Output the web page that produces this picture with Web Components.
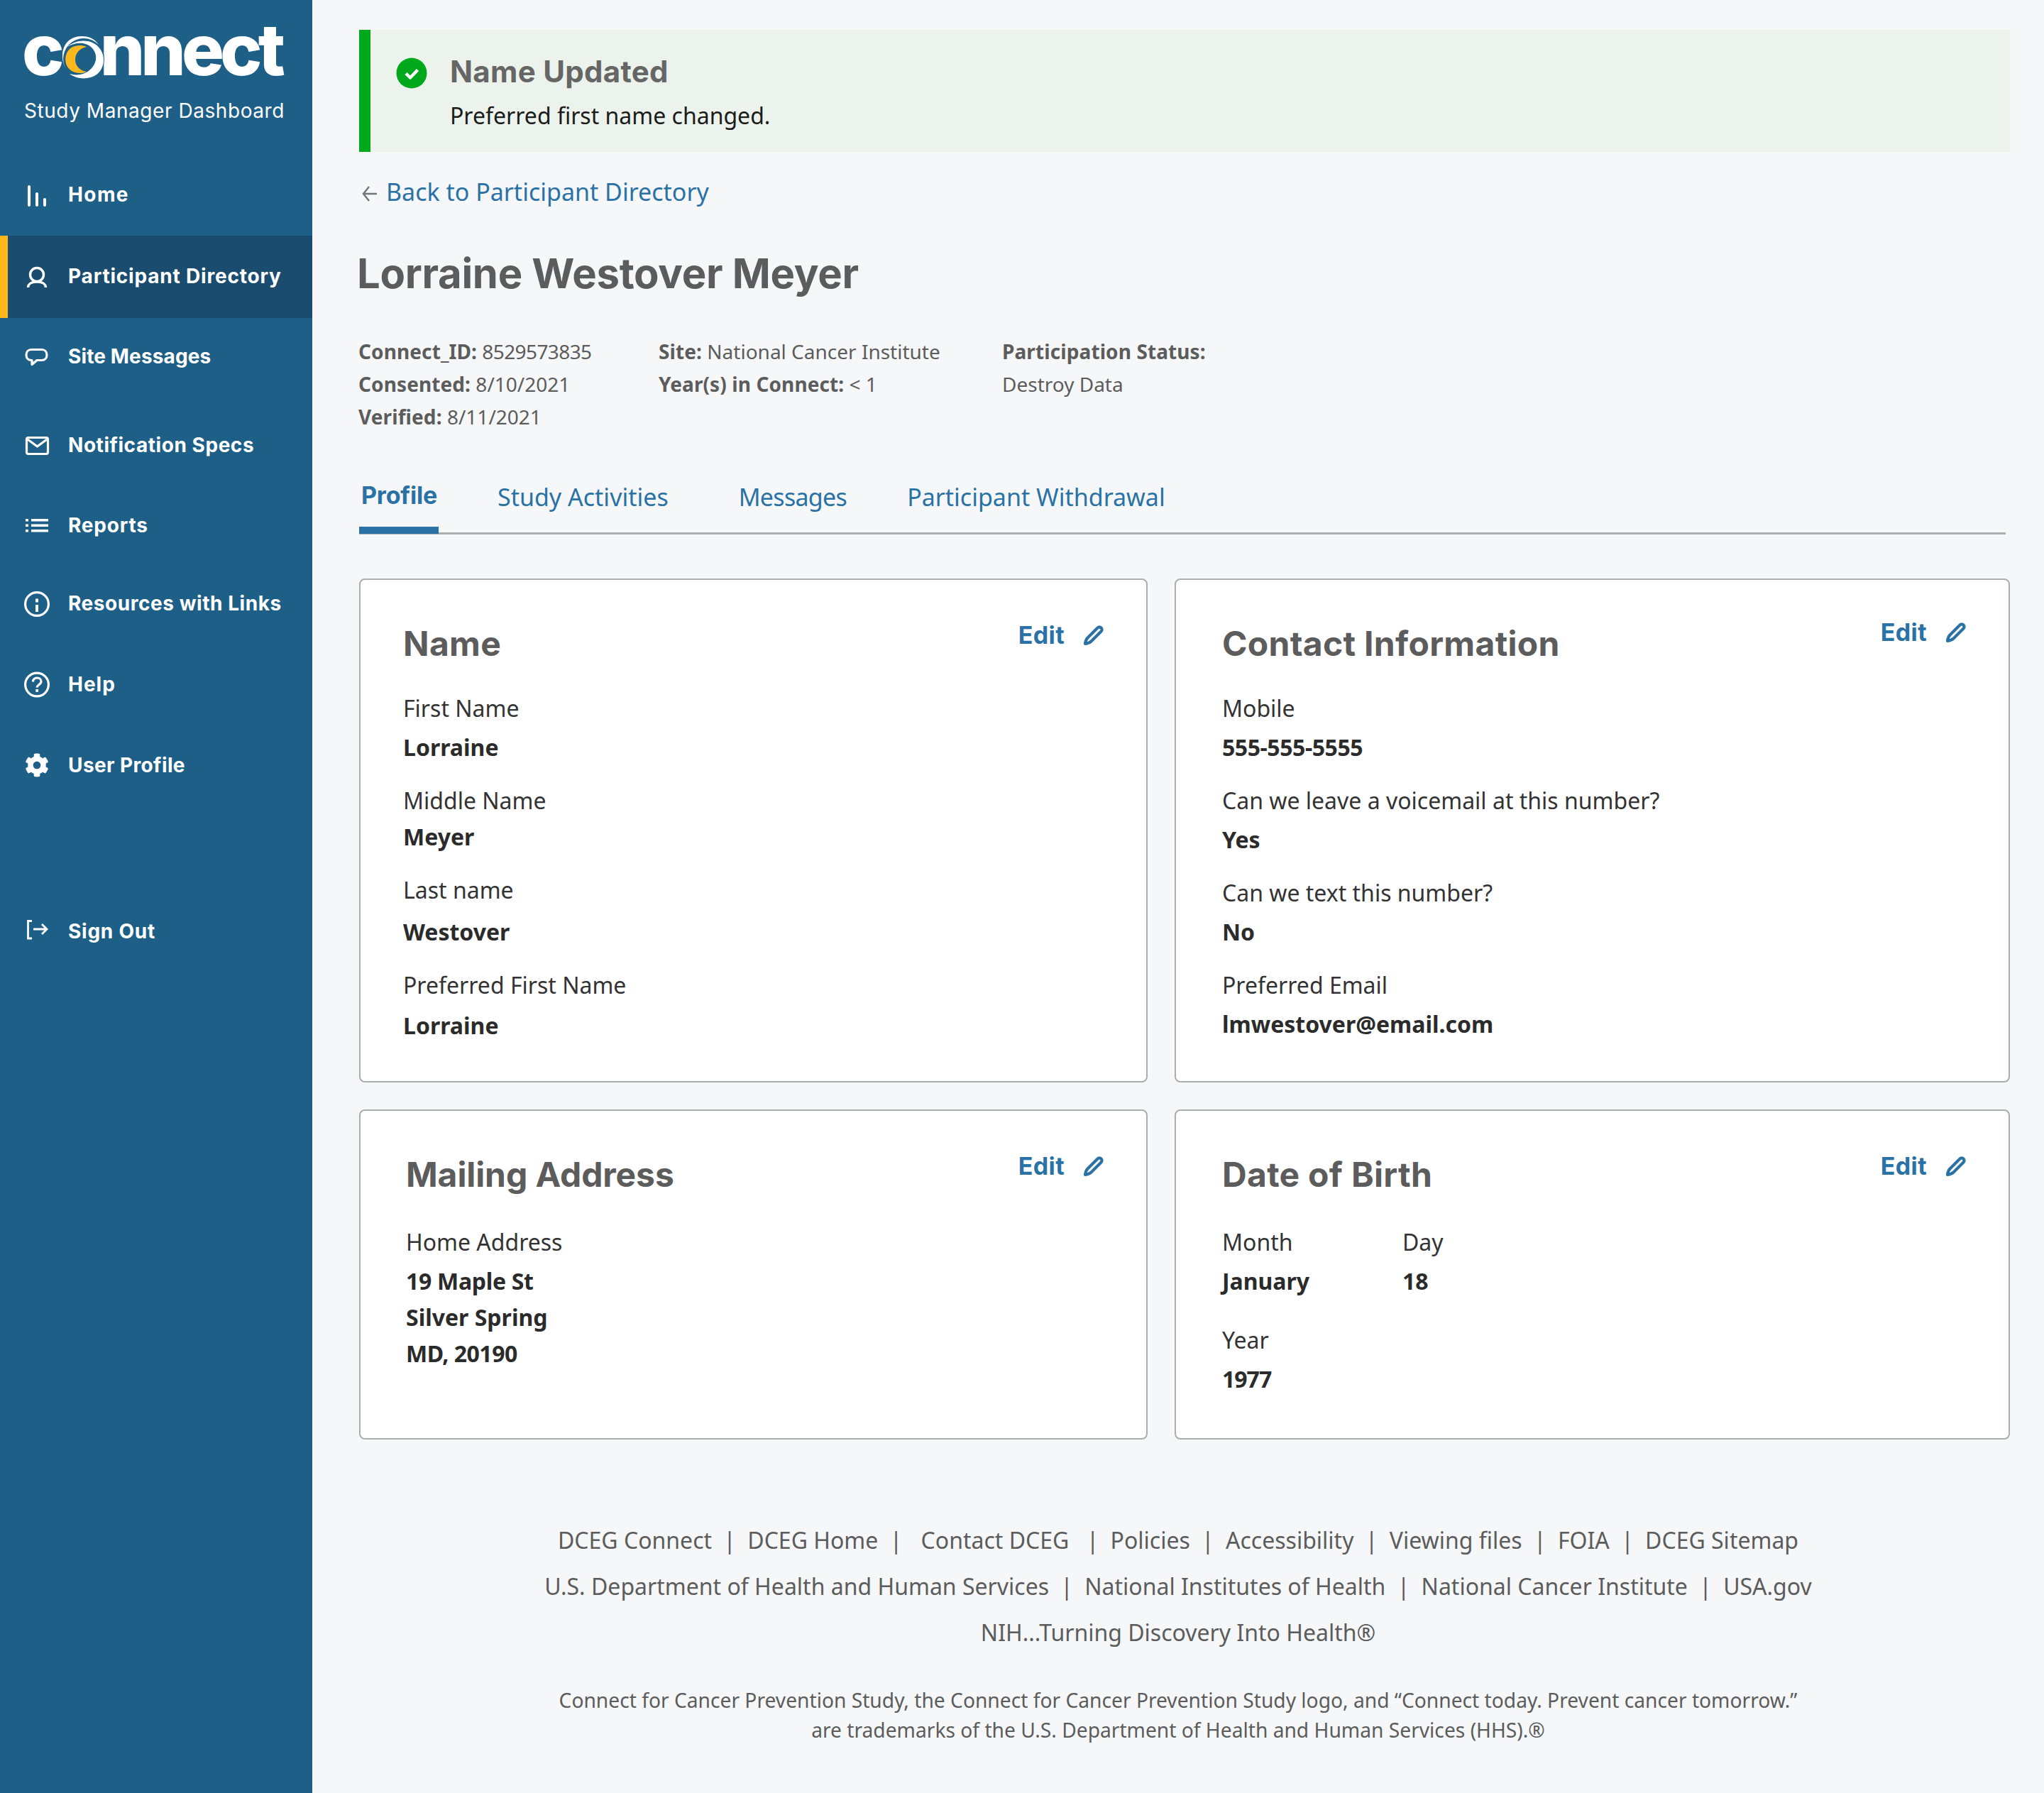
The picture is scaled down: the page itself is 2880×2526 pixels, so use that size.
<!DOCTYPE html>
<html lang="en">
<head>
<meta charset="utf-8">
<title>Connect Study Manager Dashboard</title>
<style>
html, body { margin: 0; height: 100%; }
body { background: #f5f7f9; font-family: "Noto Sans", sans-serif; color: #1b1b1b; }
svg { overflow: visible; }
</style>
</head>
<body>
<cm-layout>
  <cm-sidebar slot="side">
    <cm-nav-item h="116" ls="1.4">
      <svg slot="icon" viewBox="0 0 36 36" width="36" height="36" fill="#fff"><rect x="5" y="5" width="4" height="30" rx="2"/><rect x="16" y="15" width="4" height="20" rx="2"/><rect x="27" y="23" width="4" height="12" rx="2"/></svg>
      Home
    </cm-nav-item>
    <cm-nav-item h="116" ls=".8" active>
      <svg slot="icon" viewBox="0 0 36 36" width="36" height="36" fill="none" stroke="#fff" stroke-width="3.4"><circle cx="18" cy="16" r="9.5"/><path d="M5.500 34c0-5 5-8 12.500-8s12.500 3 12.500 8"/></svg>
      Participant Directory
    </cm-nav-item>
    <cm-nav-item h="108" ls=".13">
      <svg slot="icon" viewBox="0 0 36 36" width="36" height="36" fill="none" stroke="#fff" stroke-width="3.2" stroke-linejoin="round"><path d="M10 8.500h15c4 0 7 3 7 7.500s-3 7.500-7 7.500H18l-7 6v-6h-1c-4 0-7-3-7-7.500s3-7.500 7-7.500z"/></svg>
      Site Messages
    </cm-nav-item>
    <cm-nav-item h="142">
      <svg slot="icon" viewBox="0 0 36 36" width="36" height="36" fill="none" stroke="#fff" stroke-width="3.2" stroke-linejoin="round"><rect x="3.500" y="7.500" width="30" height="23" rx="2.500"/><path d="M5 10l13.500 10L32 10"/></svg>
      Notification Specs
    </cm-nav-item>
    <cm-nav-item h="84" ls=".8">
      <svg slot="icon" viewBox="0 0 36 36" width="36" height="36" fill="#fff"><rect x="2" y="9" width="4" height="3.500"/><rect x="2" y="16.500" width="4" height="3.500"/><rect x="2" y="24" width="4" height="3.500"/><rect x="10" y="9" width="24" height="3.500"/><rect x="10" y="16.500" width="24" height="3.500"/><rect x="10" y="24" width="24" height="3.500"/></svg>
      Reports
    </cm-nav-item>
    <cm-nav-item h="136">
      <svg slot="icon" viewBox="0 0 36 36" width="36" height="36" fill="none" stroke="#fff" stroke-width="3.2"><circle cx="18" cy="19" r="16.400"/><rect x="16" y="20" width="4" height="10" fill="#fff" stroke="none"/><rect x="16" y="11.500" width="4" height="5" fill="#fff" stroke="none"/></svg>
      Resources with Links
    </cm-nav-item>
    <cm-nav-item h="92" ls="1">
      <svg slot="icon" viewBox="0 0 36 36" width="36" height="36" fill="none" stroke="#fff" stroke-width="3.2"><circle cx="18" cy="18.500" r="16.400"/><path d="M12.500 14.500c0-3.500 2.500-5.500 5.800-5.500s5.700 2 5.700 5c0 4.500-5.800 4.500-5.800 8.500" stroke-width="3.200"/><rect x="16.300" y="25" width="3.800" height="3.800" fill="#fff" stroke="none"/></svg>
      Help
    </cm-nav-item>
    <cm-nav-item h="136" ls=".4">
      <svg slot="icon" viewBox="0 0 512 512" width="34" height="34" style="margin-left: 1px" fill="#fff"><path d="M487.4 315.7l-42.6-24.6c4.3-23.2 4.3-47 0-70.2l42.6-24.6c4.900-2.800 7.100-8.600 5.500-14-11.100-35.600-30-67.800-54.700-94.600-3.800-4.100-10-5.100-14.800-2.300L380.800 110c-17.900-15.400-38.500-27.300-60.800-35.100V25.800c0-5.600-3.900-10.500-9.400-11.700-36.700-8.200-74.300-7.800-109.200 0-5.500 1.200-9.400 6.100-9.400 11.700V75c-22.200 7.900-42.800 19.800-60.800 35.100L88.700 85.500c-4.900-2.800-11-1.900-14.800 2.300-24.700 26.700-43.600 58.900-54.700 94.600-1.700 5.400.6 11.200 5.500 14L67.300 221c-4.300 23.200-4.300 47 0 70.200l-42.600 24.600c-4.900 2.800-7.100 8.600-5.500 14 11.100 35.600 30 67.800 54.700 94.600 3.800 4.100 10 5.100 14.800 2.300l42.600-24.600c17.900 15.400 38.500 27.300 60.800 35.100v49.200c0 5.600 3.900 10.500 9.400 11.700 36.700 8.200 74.300 7.800 109.200 0 5.500-1.200 9.400-6.100 9.400-11.700v-49.200c22.200-7.900 42.800-19.800 60.800-35.100l42.600 24.600c4.900 2.800 11 1.900 14.800-2.300 24.700-26.700 43.600-58.900 54.700-94.600 1.500-5.500-.7-11.300-5.600-14.100zM256 336c-44.100 0-80-35.900-80-80s35.900-80 80-80 80 35.900 80 80-35.900 80-80 80z"/></svg>
      User Profile
    </cm-nav-item>
    <cm-nav-item h="116" top="108" ls=".75">
      <svg slot="icon" viewBox="0 0 36 36" width="36" height="36" fill="none" stroke="#fff" stroke-width="2.800"><path d="M11 3.500H5.500V28H11"/><path d="M13 15h19M25 8l7 7-7 7"/></svg>
      Sign Out
    </cm-nav-item>
  </cm-sidebar>

  <cm-alert title="Name Updated">Preferred first name changed.</cm-alert>
  <cm-back-link>Back to Participant Directory</cm-back-link>
  <cm-person name="Lorraine Westover Meyer"></cm-person>
  <cm-tabs></cm-tabs>

  <cm-card-grid>
    <cm-card heading="Name" pad="60">
      <cm-field label="First Name" gap="54" next="76">Lorraine</cm-field>
      <cm-field label="Middle Name" gap="50" next="76">Meyer</cm-field>
      <cm-field label="Last name" gap="58" next="76">Westover</cm-field>
      <cm-field label="Preferred First Name" gap="56">Lorraine</cm-field>
    </cm-card>
    <cm-card heading="Contact Information" pad="65" edit-top="54">
      <cm-field label="Mobile" gap="54" next="76"><span style="letter-spacing: -.45px">555-555-5555</span></cm-field>
      <cm-field label="Can we leave a voicemail at this number?" gap="54" next="76">Yes</cm-field>
      <cm-field label="Can we text this number?" gap="54" next="76">No</cm-field>
      <cm-field label="Preferred Email" gap="54">lmwestover@email.com</cm-field>
    </cm-card>
    <cm-card heading="Mailing Address" pad="64" top="43" ls="-.1">
      <cm-field label="Home Address" gap="54"><span style="letter-spacing: -.3px">19 Maple St</span><br>Silver Spring<br><span style="letter-spacing: -.5px">MD, 20190</span></cm-field>
    </cm-card>
    <cm-card heading="Date of Birth" pad="65" top="43">
      <cm-field-row>
        <cm-field label="Month" gap="54" next="84">January</cm-field>
        <cm-field label="Day" gap="54">18</cm-field>
      </cm-field-row>
      <cm-field label="Year" gap="54"><span style="letter-spacing: -1px">1977</span></cm-field>
    </cm-card>
  </cm-card-grid>

  <cm-footer slot="foot"></cm-footer>
</cm-layout>

<script>
const layoutTemplate = document.createElement("template");
layoutTemplate.innerHTML = `<style>
:host { display: grid; grid-template-columns: 440px 1fr; min-height: 2526px; }
main { display: flex; flex-direction: column; min-width: 0; }
#content { padding: 42px 48px 0 66px; }
</style>
<slot name="side"></slot>
<main>
  <div id="content"><slot></slot></div>
  <slot name="foot"></slot>
</main>`;

class CmLayout extends HTMLElement {
  constructor() {
    super();
    this.attachShadow({ mode: "open" }).appendChild(layoutTemplate.content.cloneNode(true));
  }
}

const sidebarTemplate = document.createElement("template");
sidebarTemplate.innerHTML = `<style>
:host { display: block; background: #1e5f88; color: #fff; }
#logo { position: relative; height: 216px; box-sizing: border-box; padding: 20px 0 0 31px; }
#word { font: 800 100px/100px Inter, sans-serif; letter-spacing: -5.900px; color: #fff; }
#moon { position: absolute; left: 88px; top: 52px; }
#sub { font: 400 28px/40px Inter, sans-serif; margin: 16px 0 0 3px; white-space: nowrap; letter-spacing: .55px; }
</style>
<div id="logo">
  <div id="word">connect</div>
  <svg id="moon" width="60" height="62" viewBox="88 52 60 62">
    <circle cx="118" cy="83" r="29" fill="#1e5f88"/>
    <path d="M95 66C104 58 118 55 130 60C141 65 146 75 146 84C146 96 139 106 128 109C117 112 106 110 98 104C108 107 119 105 126 99C133 93 136 86 135 78C133 68 126 63 117 61C109 60 101 62 95 66z" fill="#fff"/>
    <path d="M122 66C112 62 99 64 94 75C89 87 95 99 106 102C112 104 118 103 122 101C113 100 106 93 106 84C106 75 112 68 122 66z" fill="#fdb81e"/>
  </svg>
  <div id="sub">Study Manager Dashboard</div>
</div>
<slot></slot>`;

class CmSidebar extends HTMLElement {
  constructor() {
    super();
    this.attachShadow({ mode: "open" }).appendChild(sidebarTemplate.content.cloneNode(true));
  }
}

const navItemTemplate = document.createElement("template");
navItemTemplate.innerHTML = `<style>
:host { display: flex; align-items: center; box-sizing: border-box; padding-left: 34px; font: 700 28px/36px Inter, sans-serif; letter-spacing: .55px; white-space: nowrap; }
:host([active]) { background: #1a4c70; box-shadow: inset 11px 0 0 #fdb81e; padding-bottom: 2px; }
#icon { width: 62px; flex: none; display: flex; align-items: center; }
::slotted(svg) { display: block; }
</style>
<span id="icon"><slot name="icon"></slot></span>
<span><slot></slot></span>`;

class CmNavItem extends HTMLElement {
  constructor() {
    super();
    this.attachShadow({ mode: "open" }).appendChild(navItemTemplate.content.cloneNode(true));
  }

  connectedCallback() {
    this.style.height = this.getAttribute("h") + "px";
    if (this.hasAttribute("top")) {
      this.style.marginTop = this.getAttribute("top") + "px";
    }
    if (this.hasAttribute("ls")) {
      this.style.letterSpacing = this.getAttribute("ls") + "px";
    }
  }
}

const alertTemplate = document.createElement("template");
alertTemplate.innerHTML = `<style>
:host { display: flex; height: 172px; box-sizing: border-box; background: #ecf3ec; border-left: 16px solid #00a91c; padding: 39px 0 0 36px; }
svg { flex: none; margin: 0 32px 0 0; }
#title { font: 700 42px/44px Inter, sans-serif; color: #666; letter-spacing: .3px; margin-top: -2px; }
#text { font-size: 32px; line-height: 44px; margin-top: 18px; color: #1b1b1b; }
</style>
<svg width="44" height="44" viewBox="0 0 44 44"><circle cx="22" cy="22" r="21.500" fill="#00a91c"/><path d="M14 22.500l6 6 10.500-11" fill="none" stroke="#fff" stroke-width="4.500" stroke-linejoin="round"/></svg>
<div><div id="title"></div><div id="text"><slot></slot></div></div>`;

class CmAlert extends HTMLElement {
  constructor() {
    super();
    this.attachShadow({ mode: "open" }).appendChild(alertTemplate.content.cloneNode(true));
  }

  connectedCallback() {
    this.shadowRoot.getElementById("title").textContent = this.getAttribute("title");
    this.removeAttribute("title");
  }
}

const backTemplate = document.createElement("template");
backTemplate.innerHTML = `<style>
:host { display: flex; align-items: center; margin-top: 34px; height: 44px; font-size: 34px; color: #2a72a5; }
svg { flex: none; margin: 6px 13px 0 4px; }
</style>
<svg width="21" height="22" viewBox="0 0 21 22" fill="none" stroke="#71767a" stroke-width="2.400"><path d="M10 1L2 11l8 10M2 11h19"/></svg>
<span><slot></slot></span>`;

class CmBackLink extends HTMLElement {
  constructor() {
    super();
    this.attachShadow({ mode: "open" }).appendChild(backTemplate.content.cloneNode(true));
  }
}

const personTemplate = document.createElement("template");
personTemplate.innerHTML = `<style>
:host { display: block; }
h1 { font: 700 58px/72px Inter, sans-serif; color: #5c5c5c; margin: 57px 0 0 -3px; letter-spacing: -.3px; }
#meta { display: flex; margin: 51px 0 0 -1px; font-size: 28px; line-height: 46px; color: #5c5c5c; }
#meta div { flex: none; }
b { font-weight: 700; letter-spacing: .1px; }
.num { letter-spacing: -.6px; }
</style>
<h1></h1>
<div id="meta">
  <div style="width: 423px"><b>Connect_ID:</b> <span class="num">8529573835</span><br><b>Consented:</b> 8/10/2021<br><b>Verified:</b> 8/11/2021</div>
  <div style="width: 484px"><b>Site:</b> National Cancer Institute<br><b>Year(s) in Connect:</b> &lt; 1</div>
  <div><b>Participation Status:</b><br>Destroy Data</div>
</div>`;

class CmPerson extends HTMLElement {
  constructor() {
    super();
    this.attachShadow({ mode: "open" }).appendChild(personTemplate.content.cloneNode(true));
  }

  connectedCallback() {
    this.shadowRoot.querySelector("h1").textContent = this.getAttribute("name");
  }
}

const tabsTemplate = document.createElement("template");
tabsTemplate.innerHTML = `<style>
:host { display: flex; height: 88px; margin: 52px 6px 0 0; border-bottom: 3px solid #a9aeb1; font-size: 34px; line-height: 44px; color: #2a72a5; }
a { display: block; padding-top: 16px; white-space: nowrap; }
#active { font: 700 34px/44px Inter, sans-serif; width: 112px; box-sizing: border-box; padding: 14px 0 0 3px; border-bottom: 10px solid #2a72a5; height: 90px; letter-spacing: -.2px; }
</style>
<a id="active">Profile</a>
<a style="margin-left: 83px">Study Activities</a>
<a style="margin-left: 99px; letter-spacing: -.7px">Messages</a>
<a style="margin-left: 85px">Participant Withdrawal</a>`;

class CmTabs extends HTMLElement {
  constructor() {
    super();
    this.attachShadow({ mode: "open" }).appendChild(tabsTemplate.content.cloneNode(true));
  }
}

const gridTemplate = document.createElement("template");
gridTemplate.innerHTML = `<style>
:host { display: grid; grid-template-columns: 1111px 1177px; grid-template-rows: 710px 465px; gap: 38px; margin-top: 62px; }
</style>
<slot></slot>`;

class CmCardGrid extends HTMLElement {
  constructor() {
    super();
    this.attachShadow({ mode: "open" }).appendChild(gridTemplate.content.cloneNode(true));
  }
}

const cardTemplate = document.createElement("template");
cardTemplate.innerHTML = `<style>
:host { display: block; position: relative; box-sizing: border-box; background: #fff; border: 2px solid #a9aeb1; border-radius: 8px; padding-top: 60px; }
h2 { font: 700 48px/60px Inter, sans-serif; color: #5c5c5c; margin: 0; letter-spacing: .3px; }
#edit { position: absolute; top: 58px; right: 59px; display: flex; align-items: center; gap: 26px; font: 700 34px/40px Inter, sans-serif; color: #2a72a5; letter-spacing: .4px; }
#body { padding-top: 39px; }
</style>
<h2></h2>
<div id="edit">Edit
  <svg width="30" height="30" viewBox="0 0 30 30" fill="none" stroke="#2a72a5" stroke-width="4.200" stroke-linejoin="round"><path d="M3 27c.5-3.500 1.500-6.500 3.500-8.500L20.500 4.500a3.500 3.500 0 0 1 5 5L11.500 23.500C9.500 25.500 6.500 26.500 3 27z"/></svg>
</div>
<div id="body"><slot></slot></div>`;

class CmCard extends HTMLElement {
  constructor() {
    super();
    this.attachShadow({ mode: "open" }).appendChild(cardTemplate.content.cloneNode(true));
  }

  connectedCallback() {
    const pad = this.getAttribute("pad") + "px";
    const heading = this.shadowRoot.querySelector("h2");
    const body = this.shadowRoot.getElementById("body");
    heading.textContent = this.getAttribute("heading");
    heading.style.paddingLeft = pad;
    body.style.paddingLeft = pad;
    if (this.hasAttribute("ls")) {
      heading.style.letterSpacing = this.getAttribute("ls") + "px";
    }
    if (this.hasAttribute("top")) {
      body.style.paddingTop = this.getAttribute("top") + "px";
    }
    if (this.hasAttribute("edit-top")) {
      this.shadowRoot.getElementById("edit").style.top = this.getAttribute("edit-top") + "px";
    }
  }
}

const fieldTemplate = document.createElement("template");
fieldTemplate.innerHTML = `<style>
:host { display: block; font-size: 32px; color: #333; }
#label { line-height: 44px; }
#value { font-weight: 700; line-height: 51px; color: #2b2b2b; }
</style>
<div id="label"></div>
<div id="value"><slot></slot></div>`;

class CmField extends HTMLElement {
  constructor() {
    super();
    this.attachShadow({ mode: "open" }).appendChild(fieldTemplate.content.cloneNode(true));
  }

  connectedCallback() {
    this.shadowRoot.getElementById("label").textContent = this.getAttribute("label");
    // the distances between rows are not regular in the source page
    this.shadowRoot.getElementById("label").style.marginBottom = (this.getAttribute("gap") - 47.5) + "px";
    this.style.marginBottom = (this.getAttribute("next") || 0) - 47.5 + "px";
  }
}

const rowTemplate = document.createElement("template");
rowTemplate.innerHTML = `<style>
:host { display: grid; grid-template-columns: 254px auto; justify-content: start; }
</style>
<slot></slot>`;

class CmFieldRow extends HTMLElement {
  constructor() {
    super();
    this.attachShadow({ mode: "open" }).appendChild(rowTemplate.content.cloneNode(true));
  }
}

const footerTemplate = document.createElement("template");
footerTemplate.innerHTML = `<style>
:host { display: block; margin-top: 109px; text-align: center; color: #5c5c5c; font-size: 32px; line-height: 65px; }
.links { display: flex; justify-content: center; gap: 16.3px; white-space: nowrap; }
#legal { font-size: 28.2px; line-height: 42px; margin-top: 42px; }
</style>
<div class="links"><span>DCEG Connect</span><span>|</span><span>DCEG Home</span><span>|</span><span style="margin-left: 10px">Contact DCEG</span><span style="margin-left: 8px">|</span><span>Policies</span><span>|</span><span>Accessibility</span><span>|</span><span>Viewing files</span><span>|</span><span>FOIA</span><span>|</span><span>DCEG Sitemap</span></div>
<div class="links"><span>U.S. Department of Health and Human Services</span><span>|</span><span>National Institutes of Health</span><span>|</span><span>National Cancer Institute</span><span>|</span><span>USA.gov</span></div>
<div>NIH...Turning Discovery Into Health®</div>
<div id="legal">Connect for Cancer Prevention Study, the Connect for Cancer Prevention Study logo, and “Connect today. Prevent cancer tomorrow.”<br>are trademarks of the U.S. Department of Health and Human Services (HHS).®</div>`;

class CmFooter extends HTMLElement {
  constructor() {
    super();
    this.attachShadow({ mode: "open" }).appendChild(footerTemplate.content.cloneNode(true));
  }
}

customElements.define("cm-layout", CmLayout);
customElements.define("cm-sidebar", CmSidebar);
customElements.define("cm-nav-item", CmNavItem);
customElements.define("cm-alert", CmAlert);
customElements.define("cm-back-link", CmBackLink);
customElements.define("cm-person", CmPerson);
customElements.define("cm-tabs", CmTabs);
customElements.define("cm-card-grid", CmCardGrid);
customElements.define("cm-card", CmCard);
customElements.define("cm-field", CmField);
customElements.define("cm-field-row", CmFieldRow);
customElements.define("cm-footer", CmFooter);
</script>
</body>
</html>
